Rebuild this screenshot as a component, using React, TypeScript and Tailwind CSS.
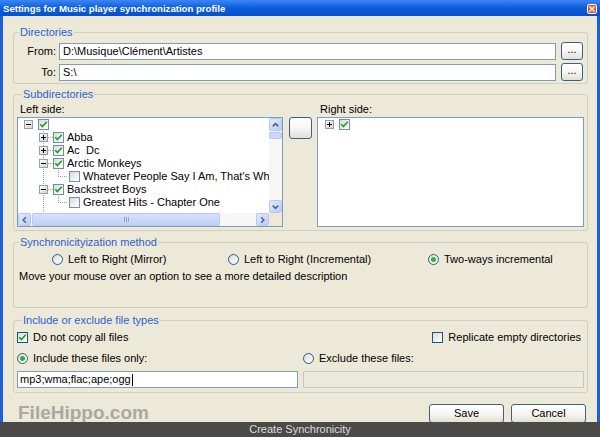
import React from 'react';

type TreeRow = {
  level: 0 | 1 | 2;
  exp: 'plus' | 'minus' | null;
  checked: boolean;
  label: string;
};

const treeRows: TreeRow[] = [
  { level: 0, exp: 'minus', checked: true, label: '' },
  { level: 1, exp: 'plus', checked: true, label: 'Abba' },
  { level: 1, exp: 'plus', checked: true, label: 'Ac  Dc' },
  { level: 1, exp: 'minus', checked: true, label: 'Arctic Monkeys' },
  { level: 2, exp: null, checked: false, label: "Whatever People Say I Am, That's What I'm Not" },
  { level: 1, exp: 'minus', checked: true, label: 'Backstreet Boys' },
  { level: 2, exp: null, checked: false, label: 'Greatest Hits - Chapter One' },
];

const indent = ['pl-[6px]', 'pl-[21px]', 'pl-[37px]'];

const Tick = () => (
  <svg width="9" height="9" viewBox="0 0 9 9">
    <path d="M1.3 4.3 L3.4 6.6 L7.8 1.8" fill="none" stroke="#21a121" strokeWidth="1.7" />
  </svg>
);

const CheckBox = ({ checked, tree }: { checked?: boolean; tree?: boolean }) => (
  <span
    className={`flex h-[11px] w-[11px] shrink-0 items-center justify-center border bg-linear-to-br from-[#dcdcd5] to-white ${
      tree ? 'border-[#6f8db5]' : 'border-[#1c5180]'
    }`}
  >
    {checked && <Tick />}
  </span>
);

const Radio = ({ checked }: { checked?: boolean }) => (
  <span className="flex h-[11px] w-[11px] shrink-0 items-center justify-center rounded-full border border-[#2c5a8c] bg-linear-to-br from-[#dcdcd5] to-white">
    {checked && <span className="h-[5px] w-[5px] rounded-full bg-[#2fb12f]" />}
  </span>
);

const Expander = ({ minus }: { minus?: boolean }) => (
  <span className="relative flex h-[9px] w-[9px] shrink-0 items-center justify-center border border-[#919fb5] bg-linear-to-br from-white to-[#d6d2c6]">
    <span className="absolute h-px w-[5px] bg-black" />
    {!minus && <span className="absolute h-[5px] w-px bg-black" />}
  </span>
);

const XpButton = ({ className = '', children }: { className?: string; children?: React.ReactNode }) => (
  <button className={`flex items-center justify-center rounded-[3px] border border-[#3d5f8c] bg-linear-to-b from-white via-[#f7f6f2] to-[#e3e0d4] text-[11px] leading-none text-black ${className}`}>
    {children}
  </button>
);

const Group = ({ title, className = '', children }: { title: string; className?: string; children?: React.ReactNode }) => (
  <fieldset className={`rounded-[3px] border border-[#d0d0bf] ${className}`}>
    <legend className="ml-[5px] px-px text-[11px] leading-[13px] text-[#2a5fd4]">{title}</legend>
    {children}
  </fieldset>
);

const Chevron = ({ dir }: { dir: 'up' | 'down' | 'left' | 'right' }) => {
  const d = {
    up: 'M3 7.5 L6 4.5 L9 7.5',
    down: 'M3 4.5 L6 7.5 L9 4.5',
    left: 'M7.5 3 L4.5 6 L7.5 9',
    right: 'M4.5 3 L7.5 6 L4.5 9',
  }[dir];
  return (
    <span className="flex h-[13px] w-[13px] shrink-0 items-center justify-center rounded-[2px] border border-[#b6c8f2] bg-linear-to-br from-[#e1eafe] to-[#b9cdf7]">
      <svg width="12" height="12" viewBox="0 0 12 12">
        <path d={d} fill="none" stroke="#4d6185" strokeWidth="1.6" />
      </svg>
    </span>
  );
};

const TreeLines = () => (
  <svg className="pointer-events-none absolute left-0 top-0" width="251" height="95">
    <g stroke="#a3a3a3" strokeDasharray="1 1" fill="none" shapeRendering="crispEdges">
      <path d="M25.5 13 V95" />
      <path d="M30 19.5 H35 M30 32.5 H35 M30 45.5 H35 M30 71.5 H35" />
      <path d="M40.5 52 V58.5 H50" />
      <path d="M40.5 78 V84.5 H50" />
    </g>
  </svg>
);

const LeftTree = () => (
  <div className="flex h-[110px] flex-col border border-[#7f9db9] bg-white">
    <div className="flex min-h-0 flex-1">
      <div className="relative flex-1 overflow-hidden">
        <TreeLines />
        {treeRows.map((r, i) => (
          <div key={i} className={`relative flex h-[13px] items-center ${indent[r.level]}`}>
            <span className="flex w-[14px] shrink-0">{r.exp && <Expander minus={r.exp === 'minus'} />}</span>
            <CheckBox tree checked={r.checked} />
            {r.label && <span className="ml-[3px] whitespace-pre leading-[13px]">{r.label}</span>}
          </div>
        ))}
      </div>
      <div className="flex w-[13px] flex-col bg-[#f6f6f2]">
        <Chevron dir="up" />
        <span className="mt-px h-[7px] rounded-[2px] border border-[#b6c8f2] bg-[#cad9fb]" />
        <span className="flex-1" />
        <Chevron dir="down" />
      </div>
    </div>
    <div className="flex h-[13px]">
      <div className="flex flex-1 bg-[#f6f6f2]">
        <Chevron dir="left" />
        <span className="ml-px flex w-[188px] items-center justify-center rounded-[2px] border border-[#b6c8f2] bg-linear-to-b from-[#d6e2fd] to-[#bfd1f8]">
          <span className="flex gap-px">
            <span className="h-[5px] w-px bg-[#8fa6d6]" />
            <span className="h-[5px] w-px bg-[#8fa6d6]" />
            <span className="h-[5px] w-px bg-[#8fa6d6]" />
          </span>
        </span>
        <span className="flex-1" />
        <Chevron dir="right" />
      </div>
      <div className="w-[13px] bg-[#ece9d8]" />
    </div>
  </div>
);

const App: React.FC = () => {
  return (
    <div className="flex h-[437px] w-[600px] flex-col overflow-hidden bg-[#ece9d8] font-['Liberation_Sans',Arial,sans-serif] text-[11px] text-black">
      {/* title bar */}
      <div className="flex h-[16px] shrink-0 items-start bg-linear-to-b from-[#3b86f5] via-[#0a5ddb] to-[#0650cf]">
        <span className="flex-1 pl-[3px] pt-[3px] text-[9.6px] font-bold leading-[11px] text-white">
          Settings for Music player synchronization profile
        </span>
        <span className="mr-[3px] mt-[4px] flex h-[10px] w-[10px] items-center justify-center rounded-[2px] border border-white bg-[#e1592f]">
          <svg width="6" height="6" viewBox="0 0 6 6">
            <path d="M0.5 0.5 L5.5 5.5 M5.5 0.5 L0.5 5.5" stroke="white" strokeWidth="1.4" />
          </svg>
        </span>
      </div>

      {/* body */}
      <div className="flex min-h-0 flex-1 flex-col overflow-hidden border-x-[3px] border-[#1a5fd9] pl-[10px] pr-[9px] pt-[10px]">
        <Group title="Directories" className="pb-[2px] pt-[3px]">
          <div className="flex flex-col gap-[3px]">
            {[
              ['From:', 'D:\\Musique\\Clément\\Artistes'],
              ['To:', 'S:\\'],
            ].map(([label, value]) => (
              <div key={label} className="flex h-[18px] items-center">
                <span className="w-[45px] pr-[3px] text-right">{label}</span>
                <div className="flex h-[17px] flex-1 items-center border border-[#7f9db9] bg-white pl-[3px]">{value}</div>
                <XpButton className="ml-[5px] mr-[4px] h-[18px] w-[22px] pb-[3px] text-[10px]">...</XpButton>
              </div>
            ))}
          </div>
        </Group>

        <Group title="Subdirectories" className="mt-[4px] pb-[3px] pl-[3px] pr-[3px] pt-px">
          <div className="flex">
            <div className="flex w-[266px] flex-col">
              <span className="mb-px h-[14px] pl-[3px] leading-[14px]">Left side:</span>
              <LeftTree />
            </div>
            <div className="ml-[6px] flex flex-col pt-[15px]">
              <XpButton className="h-[22px] w-[23px]" />
            </div>
            <div className="ml-[5px] flex flex-1 flex-col">
              <span className="mb-px h-[14px] pl-[3px] leading-[14px]">Right side:</span>
              <div className="h-[110px] border border-[#7f9db9] bg-white">
                <div className="flex h-[13px] items-center pl-[7px]">
                  <span className="flex w-[14px] shrink-0">
                    <Expander />
                  </span>
                  <CheckBox tree checked />
                </div>
              </div>
            </div>
          </div>
        </Group>

        <Group title="Synchronicityization method" className="mt-[5px] pb-[24px] pt-[4px]">
          <div className="flex h-[13px] items-center pl-[38px]">
            <label className="flex w-[176px] items-center gap-[5px]">
              <Radio />
              <span className="leading-[13px]">Left to Right (Mirror)</span>
            </label>
            <label className="flex w-[200px] items-center gap-[5px]">
              <Radio />
              <span className="leading-[13px]">Left to Right (Incremental)</span>
            </label>
            <label className="flex items-center gap-[5px]">
              <Radio checked />
              <span className="leading-[13px]">Two-ways incremental</span>
            </label>
          </div>
          <p className="mt-[4px] h-[13px] pl-[5px] leading-[13px]">
            Move your mouse over an option to see a more detailed description
          </p>
        </Group>

        <Group title="Include or exclude file types" className="mt-[6px] pb-[4px] pl-[3px] pr-[3px] pt-[4px]">
          <div className="flex h-[13px] items-center justify-between pr-[3px]">
            <label className="flex items-center gap-[5px]">
              <CheckBox checked />
              <span className="leading-[13px]">Do not copy all files</span>
            </label>
            <label className="flex items-center gap-[5px]">
              <CheckBox />
              <span className="leading-[13px]">Replicate empty directories</span>
            </label>
          </div>
          <div className="mt-[8px] grid grid-cols-2 gap-x-[5px]">
            <label className="flex h-[13px] items-center gap-[5px]">
              <Radio checked />
              <span className="leading-[13px]">Include these files only:</span>
            </label>
            <label className="flex h-[13px] items-center gap-[5px]">
              <Radio />
              <span className="leading-[13px]">Exclude these files:</span>
            </label>
            <div className="mt-[6px] flex h-[17px] items-center border border-[#7f9db9] bg-white pl-[2px]">
              mp3;wma;flac;ape;ogg<span className="ml-px h-[12px] w-px bg-black" />
            </div>
            <div className="mt-[6px] h-[17px] border border-[#c9c7ba] bg-[#ebeadf]" />
          </div>
        </Group>

        <div className="mt-[9px] flex items-start justify-between pl-[5px] pr-[2px]">
          <span className="text-[19px] font-bold leading-[22px] text-[#a9a9a0]">FileHippo.com</span>
          <div className="mt-[2px] flex gap-[7px]">
            <XpButton className="h-[19px] w-[75px]">Save</XpButton>
            <XpButton className="h-[19px] w-[75px]">Cancel</XpButton>
          </div>
        </div>
      </div>

      {/* caption bar */}
      <div className="flex h-[15px] shrink-0 items-center justify-center bg-[#4b4a46] text-[11px] leading-[15px] text-[#dedede]">
        Create Synchronicity
      </div>
    </div>
  );
};

export default App;
